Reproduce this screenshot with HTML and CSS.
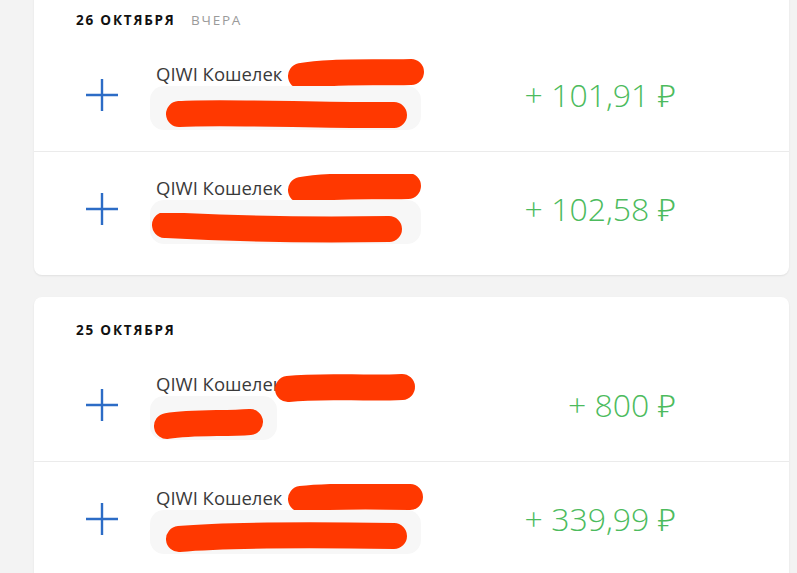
FILE: index.html
```html
<!DOCTYPE html>
<html lang="ru">
<head>
  <meta charset="UTF-8" />
  <meta name="viewport" content="width=device-width, initial-scale=1.0"/>
  <title>История платежей</title>
  <link rel="stylesheet" href="styles.css">
</head>
<body>

  <div class="feed">

    <div class="day first">
      <div class="day-head">
        <span class="date">26 октября</span>
        <span class="rel">вчера</span>
      </div>

      <div class="tx">
        <div class="tx-icon">
          <svg width="32" height="32" viewBox="0 0 32 32"><path d="M16 0V32M0 16H32" /></svg>
        </div>
        <div class="info">
          <div class="name">QIWI Кошелек
            <svg class="mark mark-a" width="138" height="30" viewBox="0 0 138 30"><path d="M14 17 C40 12 80 14 124 13" /></svg>
          </div>
          <div class="detail">
            <svg class="mark mark-b" width="244" height="30" viewBox="0 0 244 30"><path d="M14 15 C60 12 160 17 229 16" /></svg>
          </div>
        </div>
        <div class="amount">+ 101,91 ₽</div>
      </div>

      <div class="tx">
        <div class="tx-icon">
          <svg width="32" height="32" viewBox="0 0 32 32"><path d="M16 0V32M0 16H32" /></svg>
        </div>
        <div class="info">
          <div class="name">QIWI Кошелек
            <svg class="mark mark-a" width="135" height="28" viewBox="0 0 135 28"><path d="M14 16 C40 11 80 13 121 12" /></svg>
          </div>
          <div class="detail">
            <svg class="mark mark-b wide" width="252" height="30" viewBox="0 0 252 30"><path d="M14 12 C50 14 120 18 238 16" /></svg>
          </div>
        </div>
        <div class="amount">+ 102,58 ₽</div>
      </div>
    </div>

    <div class="day">
      <div class="day-head">
        <span class="date">25 октября</span>
      </div>

      <div class="tx">
        <div class="tx-icon">
          <svg width="32" height="32" viewBox="0 0 32 32"><path d="M16 0V32M0 16H32" /></svg>
        </div>
        <div class="info">
          <div class="name">QIWI Кошелек
            <svg class="mark mark-a over" width="144" height="32" viewBox="0 0 144 32"><path d="M15 16 C50 12 90 16 129 14" /></svg>
          </div>
          <div class="detail">
            <svg class="mark mark-b short" width="112" height="32" viewBox="0 0 112 32"><path d="M14 18 C40 14 70 16 97 14" /></svg>
          </div>
        </div>
        <div class="amount">+ 800 ₽</div>
      </div>

      <div class="tx">
        <div class="tx-icon">
          <svg width="32" height="32" viewBox="0 0 32 32"><path d="M16 0V32M0 16H32" /></svg>
        </div>
        <div class="info">
          <div class="name">QIWI Кошелек
            <svg class="mark mark-a" width="137" height="28" viewBox="0 0 137 28"><path d="M14 15 C40 12 80 12 123 13" /></svg>
          </div>
          <div class="detail">
            <svg class="mark mark-b" width="244" height="34" viewBox="0 0 244 34"><path d="M14 18 C60 14 160 14 229 15" /></svg>
          </div>
        </div>
        <div class="amount">+ 339,99 ₽</div>
      </div>
    </div>

  </div>

</body>
</html>
```

FILE: styles.css
```css
body {
  margin: 0;
  font-family: "Open Sans", "Noto Sans", sans-serif;
  background-color: #f3f3f3;
  color: #333;
  overflow: hidden;
}

.feed {
  display: flex;
  flex-direction: column;
  gap: 22px;
  padding: 0 8px 0 34px;
}

.day {
  background: #fff;
  border-radius: 8px;
  box-shadow: 0 1px 2px rgba(0, 0, 0, 0.08);
  padding-bottom: 10px;
}

.day.first {
  margin-top: -13px;
  border-radius: 0 0 8px 8px;
}

.day-head {
  padding: 24px 0 8px 42px;
  height: 19px;
  font-size: 13.5px;
  letter-spacing: 1.8px;
  text-transform: uppercase;
  line-height: 19px;
}

.date {
  font-weight: 700;
  color: #111;
}

.rel {
  margin-left: 10px;
  color: #9a9a9a;
}

.tx {
  display: flex;
  align-items: center;
  height: 113px;
}

.tx + .tx {
  border-top: 1px solid #ebebeb;
}

.tx-icon {
  width: 32px;
  height: 32px;
  margin: 0 38px 0 52px;
}

.tx-icon path {
  stroke: #2c6cc6;
  stroke-width: 2.4;
  fill: none;
}

.info {
  display: flex;
  flex-direction: column;
  align-items: flex-start;
  width: 270px;
  margin-top: 2px;
}

.name {
  display: flex;
  align-items: center;
  font-size: 18.5px;
  height: 24px;
  color: #3a3a3a;
  white-space: nowrap;
}

.detail {
  display: flex;
  align-items: center;
  box-sizing: border-box;
  height: 44px;
  padding: 12px 12px 0 0;
  margin-left: -6px;
  border-radius: 14px;
  background: #f7f7f7;
}

.mark path {
  fill: none;
  stroke: #ff3800;
  stroke-width: 26;
  stroke-linecap: round;
}

.mark-a {
  margin-left: 5px;
}

.mark-a.over {
  margin: 10px 0 0 -9px;
}

.mark-b {
  margin-left: 15px;
}

.mark-b.wide {
  margin-left: 1px;
  margin-right: 6px;
}

.mark-b.short {
  margin-left: 3px;
}

.amount {
  flex: 1;
  text-align: right;
  padding-right: 113px;
  font-size: 32px;
  font-weight: 300;
  color: #4cbb5d;
}
```
